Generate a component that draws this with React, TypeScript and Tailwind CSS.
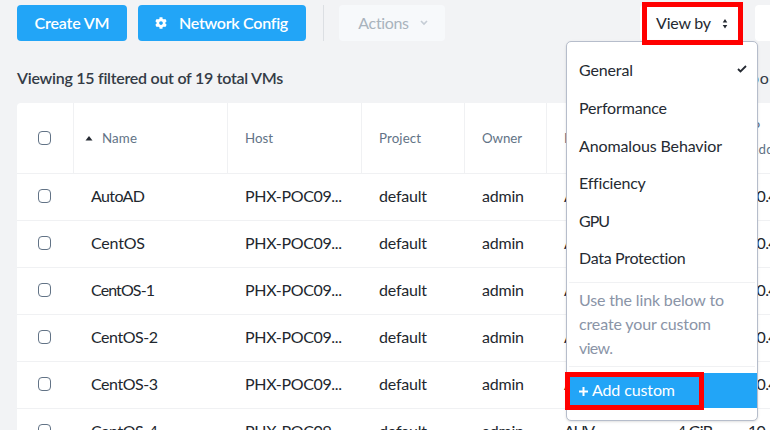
import { useLayoutEffect, useRef, useState } from 'react';
import { FaCog } from 'react-icons/fa';

const views = [
  { name: 'General', width: 54 },
  { name: 'Performance', width: 88 },
  { name: 'Anomalous Behavior', width: 143 },
  { name: 'Efficiency', width: 66 },
  { name: 'GPU', width: 31 },
  { name: 'Data Protection', width: 107 },
];

const vms = ['AutoAD', 'CentOS', 'CentOS-1', 'CentOS-2', 'CentOS-3', 'CentOS-4'];

const columns = 'grid grid-cols-[57px_154px_133px_103px_82px_101px_84px_100px]';

// Tracks a single line of text so that it spans the given width.
function Label({ children, width, className = '' }: { children: string; width: number; className?: string }) {
  const ref = useRef<HTMLSpanElement>(null);
  const [spacing, setSpacing] = useState(0);
  useLayoutEffect(() => {
    if (!ref.current) return;
    ref.current.style.letterSpacing = '0px';
    const natural = ref.current.getBoundingClientRect().width;
    const next = (width - natural) / (children.length - 1);
    ref.current.style.letterSpacing = `${next}px`;
    setSpacing(next);
  }, [children, width]);
  return (
    <span className="block h-[22px] shrink-0 whitespace-nowrap leading-[22px]" style={{ width }}>
      <span ref={ref} className={className} style={{ letterSpacing: spacing }}>{children}</span>
    </span>
  );
}

function Checkbox() {
  return <span className="ml-[21px] block h-[14px] w-[13px] rounded-[4px] border border-[#627386] bg-white" />;
}

function Toolbar() {
  return (
    <div className="flex h-9 w-[800px] items-center">
      <button className="flex h-9 w-[110px] shrink-0 items-center justify-center rounded-[4px] bg-[#22a5f7] text-white">
        <Label width={75} className="font-semibold">Create VM</Label>
      </button>
      <button className="ml-[11px] flex h-9 w-[168px] shrink-0 items-center rounded-[4px] bg-[#22a5f7] pl-[17px] text-white">
        <FaCog size={12} />
        <span className="ml-3"><Label width={109} className="font-semibold">Network Config</Label></span>
      </button>
      <span className="ml-[17px] h-9 w-px shrink-0 bg-[#dcdfe3]" />
      <button className="ml-[15px] flex h-9 w-[106px] shrink-0 items-center rounded-[4px] bg-[#f7f9fb] pl-[19px] text-[#a9b3bd]">
        <Label width={51}>Actions</Label>
        <svg width="8" height="6" className="ml-[11px]" fill="none" stroke="#c5cdd5" strokeWidth="1.6"><path d="M1 1l3 3 3-3" /></svg>
      </button>
      <button className="ml-[195px] flex h-9 w-[102px] shrink-0 items-center rounded-[4px] bg-white pl-4 text-[#252a32]">
        <Label width={55}>View by</Label>
        <svg width="6" height="10" className="ml-[11px] mt-0.5" fill="#252a32"><path d="M3 0L5.3 3.5H.7zM3 9.5L.7 6h4.6z" /></svg>
      </button>
      <span className="ml-[13px] h-9 w-10 shrink-0 rounded-[4px] bg-white" />
    </div>
  );
}

function Table() {
  const cell = 'flex items-center border-l border-[#f0f1f3] pl-[17px]';
  return (
    <div className="w-[814px] rounded-t-[4px] bg-white">
      <div className={`${columns} h-[71px] border-b border-[#f0f1f3] text-[13.3px] text-[#627386]`}>
        <div className="flex items-center"><Checkbox /></div>
        <div className="-ml-px flex items-center border-l border-[#f0f1f3] pl-[11px]">
          <svg width="8" height="5" fill="#252a32"><path d="M4 0l3.5 4.5h-7z" /></svg>
          <span className="ml-[9px]"><Label width={35}>Name</Label></span>
        </div>
        <div className={`${cell} -ml-px`}><Label width={28}>Host</Label></div>
        <div className={cell}><Label width={42}>Project</Label></div>
        <div className={cell}><Label width={40}>Owner</Label></div>
        <div className={cell}><Label width={65}>Hypervisor</Label></div>
        <div className={cell} />
        <div className="flex flex-col justify-center border-l border-[#f0f1f3] pl-[17px]">
          <Label width={11}>IP</Label>
          <Label width={50}>Address</Label>
        </div>
      </div>
      {vms.map((vm, i) => (
        <div key={vm} className={`${columns} h-[47px] items-center border-b border-[#f0f1f3] pb-0.5 text-[#22272e]`}>
          <Checkbox />
          <span className="pl-[17px]"><Label width={i < 2 ? 54 : i === 2 ? 64 : 67}>{vm}</Label></span>
          <span className="pl-[17px]"><Label width={97}>PHX-POC09...</Label></span>
          <span className="pl-[18px]"><Label width={48}>default</Label></span>
          <span className="pl-[18px]"><Label width={42}>admin</Label></span>
          <span className="pl-[18px]"><Label width={31}>AHV</Label></span>
          <span className="pl-[30px]"><Label width={36}>4 GiB</Label></span>
          <span className="pl-[17px]"><Label width={70}>10.42.9.50</Label></span>
        </div>
      ))}
    </div>
  );
}

function ViewMenu() {
  return (
    <div className="absolute left-[566px] top-[41px] h-[380px] w-[192px] rounded-[5px] border border-[#b6bdcb] bg-white pt-[9.6px] text-[#252a32] shadow-sm">
      {views.map((view, i) => (
        <div key={view.name} className="flex h-[37.6px] items-center justify-between pl-3 pr-[10px]">
          <Label width={view.width}>{view.name}</Label>
          {i === 0 && <svg width="10" height="8" className="-mt-0.5" fill="none" stroke="#252a32" strokeWidth="1.8"><path d="M1 4l2.5 2.5L9 1" /></svg>}
        </div>
      ))}
      <div className="mx-[2px] mt-[4.4px] h-[85px] border-y border-[#f0f1f3] px-[10px] pt-[6px] text-[#8a94a7]">
        <div className="h-6"><Label width={145}>Use the link below to</Label></div>
        <div className="h-6"><Label width={132}>create your custom</Label></div>
        <Label width={34}>view.</Label>
      </div>
      <div className="mt-[6px] flex h-[35px] items-center bg-[#22a5f7] pl-3 text-white">
        <svg width="9" height="9" className="mt-0.5" stroke="currentColor" strokeWidth="2"><path d="M0 4.5h9M4.5 0v9" /></svg>
        <span className="ml-1"><Label width={83}>Add custom</Label></span>
      </div>
    </div>
  );
}

export default function App() {
  return (
    <main className="relative h-[430px] w-[770px] overflow-hidden bg-[#f2f3f5] pl-[17px] pt-[5px] font-['Lato',sans-serif]">
      <Toolbar />
      <div className="flex h-[62px] items-center pt-[11px] text-[#343b46]">
        <Label width={266} className="font-semibold">Viewing 15 filtered out of 19 total VMs</Label>
        <span className="ml-[467px]"><Label width={33}>pool</Label></span>
      </div>
      <Table />
      <ViewMenu />
      <div className="absolute left-[642px] top-[2px] h-[43px] w-[101px] border-[5px] border-[#ff0000]" />
      <div className="absolute left-[565px] top-[372px] h-[38px] w-[139px] border-[5px] border-[#ff0000]" />
    </main>
  );
}
